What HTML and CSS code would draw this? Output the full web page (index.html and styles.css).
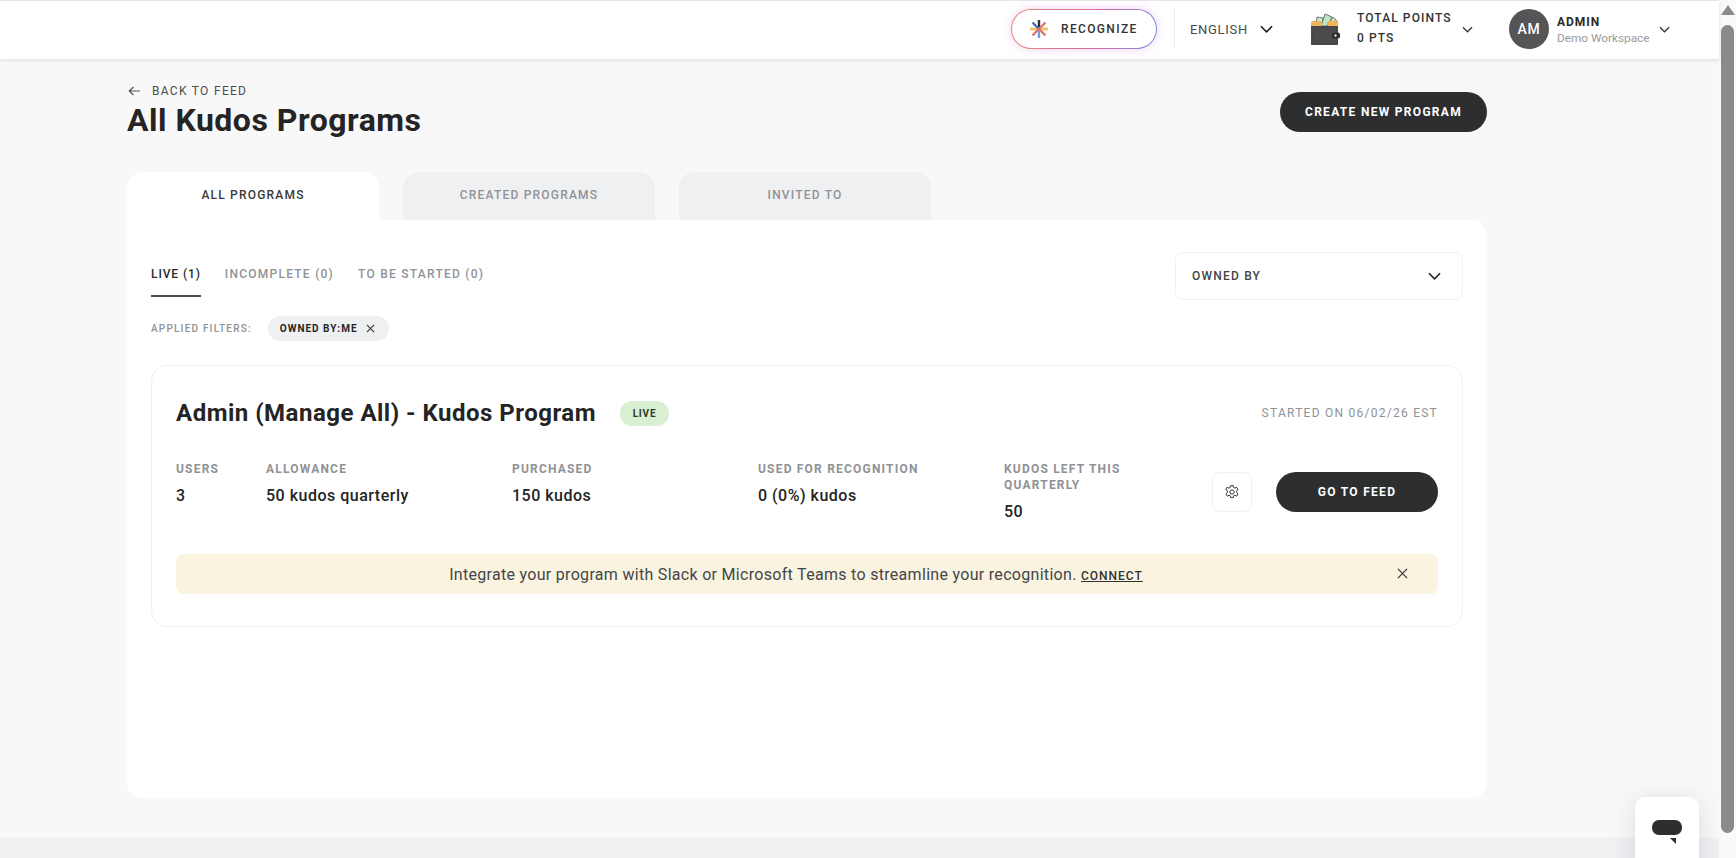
FILE: index.html
```html
<!DOCTYPE html>
<html lang="en">
<head>
<meta charset="utf-8">
<title>All Kudos Programs</title>
<link rel="stylesheet" href="styles.css">
</head>
<body>
<div class="page">
  <header class="topbar">
    <button class="recognize">
      <svg class="rec-icon" viewBox="0 0 20 20" width="20" height="20" aria-hidden="true">
        <path d="M1 10H19" stroke="#f2c27a" stroke-width="3"/>
        <path d="M10 1V10" stroke="#2e3033" stroke-width="2.4"/>
        <path d="M10 10V19" stroke="#6f9ee8" stroke-width="2.4"/>
        <path d="M3.5 3.5L10 10" stroke="#3f6fb5" stroke-width="2.4"/>
        <path d="M16.5 3.5L3.5 16.5" stroke="#d9776a" stroke-width="2.4"/>
        <path d="M10 10L16.5 16.5" stroke="#d9776a" stroke-width="2.4"/>
      </svg>
      <span>RECOGNIZE</span>
    </button>
    <div class="divider"></div>
    <div class="lang"><span>ENGLISH</span>
      <svg class="chev" viewBox="0 0 14 8" width="13" height="8"><path d="M1 1L7 7L13 1" fill="none" stroke="#2a1a1a" stroke-width="1.7"/></svg>
    </div>
    <div class="points">
      <svg class="wallet" viewBox="0 0 30 32" width="30" height="32" aria-hidden="true">
        <path d="M6 13L7 4L13 5L13 13Z" fill="#cfe8cf" stroke="#4a5a4a" stroke-width=".8"/>
        <path d="M11 13L15 1L22 4L18 13Z" fill="#bfe3c4" stroke="#4a5a4a" stroke-width=".8"/>
        <path d="M17 13L23 4L28 9L24 13Z" fill="#cfe8cf" stroke="#4a5a4a" stroke-width=".8"/>
        <circle cx="4" cy="11" r="3.2" fill="#f0b45a"/>
        <circle cx="9" cy="11" r="3" fill="#f0b45a"/>
        <circle cx="20" cy="10.5" r="3" fill="#f0b45a"/>
        <circle cx="25" cy="10.5" r="3.2" fill="#f0b45a"/>
        <rect x="1" y="13" width="27" height="19" fill="#4b4b4d"/>
        <rect x="2.5" y="14.5" width="24" height="16" fill="none" stroke="#3b3b3d" stroke-width=".6" stroke-dasharray="1 1"/>
        <rect x="22" y="19.5" width="8" height="6" rx="2" fill="#2d2d2f"/>
        <rect x="24.5" y="21.5" width="2" height="2" fill="#fff"/>
      </svg>
      <div class="points-text">
        <span>TOTAL POINTS</span>
        <span>0 PTS</span>
      </div>
      <svg class="chev chev-points" viewBox="0 0 12 7" width="11" height="7"><path d="M1 1L6 6L11 1" fill="none" stroke="#333" stroke-width="1.3"/></svg>
    </div>
    <div class="user">
      <div class="avatar">AM</div>
      <div class="user-text">
        <span class="user-name">ADMIN</span>
        <span class="user-org">Demo Workspace</span>
      </div>
      <svg class="chev chev-user" viewBox="0 0 12 7" width="11" height="7"><path d="M1 1L6 6L11 1" fill="none" stroke="#333" stroke-width="1.3"/></svg>
    </div>
  </header>

  <main class="content">
    <div class="head">
      <div>
        <a class="back">
          <svg viewBox="0 0 12 10" width="12" height="10" aria-hidden="true"><path d="M5.5 1L1.2 5L5.5 9M1.2 5H12" fill="none" stroke="#555" stroke-width="1.2"/></svg>
          <span>BACK TO FEED</span>
        </a>
        <h1>All Kudos Programs</h1>
      </div>
      <button class="btn btn-create">CREATE NEW PROGRAM</button>
    </div>

    <div class="tabs">
      <div class="tab active">ALL PROGRAMS</div>
      <div class="tab">CREATED PROGRAMS</div>
      <div class="tab">INVITED TO</div>
    </div>

    <section class="panel">
      <div class="panel-top">
        <nav class="subtabs">
          <span class="subtab on">LIVE (1)</span>
          <span class="subtab">INCOMPLETE (0)</span>
          <span class="subtab">TO BE STARTED (0)</span>
        </nav>
        <div class="select">
          <span>OWNED BY</span>
          <svg viewBox="0 0 14 8" width="13" height="8"><path d="M1 1L7 7L13 1" fill="none" stroke="#222" stroke-width="1.7"/></svg>
        </div>
      </div>
      <div class="filters">
        <span class="filters-label">APPLIED FILTERS:</span>
        <span class="chip">OWNED BY:ME
          <svg viewBox="0 0 10 10" width="9" height="9"><path d="M1 1L9 9M9 1L1 9" stroke="#333" stroke-width="1.2"/></svg>
        </span>
      </div>

      <article class="card">
        <div class="card-head">
          <h2>Admin (Manage All) - Kudos Program</h2>
          <span class="badge">LIVE</span>
          <span class="started">STARTED ON 06/02/26 EST</span>
        </div>
        <div class="card-body">
          <div class="stat stat-users"><div class="label">USERS</div><div class="value">3</div></div>
          <div class="stat"><div class="label">ALLOWANCE</div><div class="value">50 kudos quarterly</div></div>
          <div class="stat"><div class="label">PURCHASED</div><div class="value">150 kudos</div></div>
          <div class="stat"><div class="label">USED FOR RECOGNITION</div><div class="value">0 (0%) kudos</div></div>
          <div class="stat stat-left"><div class="label">KUDOS LEFT THIS QUARTERLY</div><div class="value">50</div></div>
          <div class="actions">
            <button class="gear" aria-label="Settings">
              <svg viewBox="0 0 24 24" width="16" height="16" fill="none" stroke="#333" stroke-width="1.5" stroke-linejoin="round">
                <path d="M10 2.5h4l.6 2.9 1.7.8 2.6-1.4 2.2 3.4-2.1 1.9v2.8l2.1 1.9-2.2 3.4-2.6-1.4-1.7.8-.6 2.9h-4l-.6-2.9-1.7-.8-2.6 1.4-2.2-3.4 2.1-1.9v-2.8L2.5 8.2l2.2-3.4 2.6 1.4 1.7-.8z"/>
                <circle cx="12" cy="12" r="3.2"/>
              </svg>
            </button>
            <button class="btn btn-feed">GO TO FEED</button>
          </div>
        </div>
        <div class="banner">
          <p>Integrate your program with Slack or Microsoft Teams to streamline your recognition. <a>CONNECT</a></p>
          <svg class="banner-x" viewBox="0 0 12 12" width="11" height="11"><path d="M1 1L11 11M11 1L1 11" stroke="#333" stroke-width="1.3"/></svg>
        </div>
      </article>
    </section>
  </main>
  <div class="footer-strip"></div>
</div>

<aside class="scrollbar">
  <div class="sb-arrow"></div>
  <div class="sb-thumb"></div>
</aside>

<div class="chat">
  <svg viewBox="0 0 30 24" width="30" height="24" aria-hidden="true">
    <rect x="0" y="0" width="30" height="15" rx="7" fill="#2d2e30"/>
    <path d="M18 18H24V24Z" fill="#2d2e30"/>
  </svg>
</div>
</body>
</html>
```
FILE: styles.css
```css
* { box-sizing: border-box; }
html, body { margin: 0; height: 100%; overflow: hidden; }
body {
  display: flex;
  font-family: "Roboto", "Liberation Sans", sans-serif;
  color: #2a2a2a;
  background: #f8f8f8;
}
button { font-family: inherit; cursor: pointer; }
.page {
  flex: 1;
  min-width: 0;
  height: 100%;
  display: flex;
  flex-direction: column;
}

/* top bar */
.topbar {
  flex: none;
  height: 59px;
  background: #fff;
  border-top: 1px solid #e6e7e9;
  box-shadow: 0 1px 4px rgba(0,0,0,.12);
  display: flex;
  align-items: flex-start;
  padding: 8px 0 0 1011px;
  position: relative;
  z-index: 2;
}
.topbar > * { height: 40px; }
.recognize {
  width: 146px;
  border-radius: 20px;
  border: 1px solid transparent;
  background:
    linear-gradient(#fff, #fff) padding-box,
    linear-gradient(100deg, #e58a78, #d86aa0 60%, #6f8fe8) border-box;
  box-shadow: 0 0 10px rgba(214,120,220,.35);
  display: flex;
  align-items: center;
  padding: 0 0 0 17px;
  gap: 12px;
  font-size: 12px;
  font-weight: 500;
  letter-spacing: 1.35px;
  color: #333;
}
.rec-icon { flex: none; }
.divider { width: 1px; background: #eceded; margin-left: 17px; }
.lang {
  display: flex;
  align-items: center;
  margin-left: 15px;
  font-size: 13px;
  letter-spacing: .7px;
  color: #4a4a4a;
  gap: 12px;
}
.points { display: flex; align-items: center; margin-left: 37px; }
.wallet { flex: none; }
.points-text {
  display: flex;
  flex-direction: column;
  gap: 7px;
  margin: 0 0 2px 17px;
  width: 105px;
  font-size: 12px;
  font-weight: 500;
  line-height: 13px;
  letter-spacing: 1.1px;
  color: #333;
}
.chev { flex: none; }
.user { display: flex; align-items: center; margin-left: 36px; }
.avatar {
  width: 40px;
  height: 40px;
  border-radius: 50%;
  background: #555456;
  color: #fff;
  font-size: 14px;
  font-weight: 500;
  letter-spacing: .6px;
  display: flex;
  align-items: center;
  justify-content: center;
}
.user-text { display: flex; flex-direction: column; margin: 1px 0 0 8px; width: 102px; gap: 2px; }
.user-name { font-size: 12px; font-weight: 700; letter-spacing: 1px; line-height: 14px; color: #2a2a2a; }
.user-org { font-size: 11.8px; line-height: 14px; color: #9a9a9a; }

/* content */
.content {
  flex: 1;
  width: 1360px;
  margin-left: 127px;
  display: flex;
  flex-direction: column;
  min-height: 0;
}
.head {
  display: flex;
  justify-content: space-between;
  align-items: flex-start;
  height: 113px;
  padding-top: 24px;
}
.back {
  display: flex;
  align-items: center;
  gap: 12px;
  padding-left: 1px;
  font-size: 12px;
  line-height: 16px;
  letter-spacing: 1.3px;
  color: #4c4c4c;
}
h1 {
  margin: 1px 0 0;
  font-size: 32px;
  line-height: 40px;
  font-weight: 700;
  color: #242424;
  letter-spacing: .5px;
}
.btn {
  border: 0;
  background: #2d2e30;
  color: #fff;
  height: 40px;
  border-radius: 20px;
  font-size: 12px;
  font-weight: 700;
  letter-spacing: 1.3px;
}
.btn-create { width: 207px; margin-top: 9px; }

.tabs { display: flex; gap: 24px; flex: none; }
.tab {
  width: 252px;
  height: 48px;
  background: #eff0f2;
  border-radius: 16px 16px 0 0;
  display: flex;
  justify-content: center;
  padding-top: 15px;
  font-size: 12px;
  line-height: 16px;
  font-weight: 500;
  letter-spacing: 1.2px;
  color: #8f9296;
}
.tab.active { background: #fff; color: #3a3a3a; }

.panel {
  height: 578px;
  flex: none;
  background: #fff;
  border-radius: 0 16px 16px 16px;
  padding: 32px 24px 0;
}
.panel-top { display: flex; justify-content: space-between; align-items: flex-start; }
.subtabs { display: flex; gap: 24px; }
.subtab {
  height: 45px;
  padding-top: 14px;
  font-size: 12px;
  line-height: 16px;
  font-weight: 500;
  letter-spacing: 1.25px;
  color: #8f9296;
}
.subtab.on { color: #2a2a2a; border-bottom: 2px solid #4d4d50; letter-spacing: .9px; }
.select {
  width: 288px;
  height: 48px;
  border: 1px solid #eff0f2;
  border-radius: 8px;
  display: flex;
  justify-content: space-between;
  align-items: center;
  padding: 0 21px 0 16px;
  font-size: 12px;
  font-weight: 500;
  letter-spacing: 1.2px;
  color: #444;
}
.filters { display: flex; align-items: center; margin-top: 16px; gap: 16px; }
.filters-label { font-size: 10px; font-weight: 500; letter-spacing: 1.2px; color: #8f9296; }
.chip {
  display: flex;
  align-items: center;
  justify-content: space-between;
  width: 121px;
  height: 25px;
  padding: 0 14px 0 12px;
  border-radius: 13px;
  background: #eff0f2;
  font-size: 10px;
  font-weight: 700;
  letter-spacing: 1px;
  color: #242424;
}

.card {
  margin-top: 24px;
  height: 262px;
  border: 1px solid #eff0f2;
  border-radius: 16px;
  padding: 35px 24px 0;
}
.card-head { display: flex; align-items: center; height: 25px; }
h2 { margin: 0; font-size: 24px; font-weight: 700; line-height: 25px; color: #242424; letter-spacing: .5px; }
.badge {
  margin-left: 24px;
  width: 49px;
  height: 25px;
  border-radius: 12px;
  background: #d9efd2;
  display: flex;
  align-items: center;
  justify-content: center;
  font-size: 10px;
  font-weight: 700;
  letter-spacing: .8px;
  color: #2a3a2a;
}
.started {
  margin: 0 0 2px auto;
  font-size: 12px;
  letter-spacing: 1.25px;
  color: #8f9296;
}
.card-body { display: flex; align-items: flex-start; margin-top: 35px; height: 93px; }
.stat { width: 246px; flex: none; }
.stat-users { width: 90px; }
.stat-left { width: 186px; }
.label {
  font-size: 12px;
  line-height: 16px;
  font-weight: 700;
  letter-spacing: 1.2px;
  color: #8f9296;
}
.value {
  margin-top: 9px;
  font-size: 16px;
  line-height: 20px;
  font-weight: 500;
  letter-spacing: .5px;
  color: #242424;
}
.actions { display: flex; align-items: center; gap: 24px; margin-left: 22px; margin-top: 11px; }
.gear {
  width: 40px;
  height: 40px;
  border: 1px solid #eff0f2;
  border-radius: 8px;
  background: #fff;
  display: flex;
  align-items: center;
  justify-content: center;
  padding: 0;
}
.btn-feed { width: 162px; }
.banner {
  height: 40px;
  background: #faf3e0;
  border-radius: 8px;
  display: flex;
  align-items: center;
  justify-content: center;
  padding-right: 22px;
  position: relative;
}
.banner p { margin: 0; font-size: 16px; letter-spacing: .3px; color: #44464a; }
.banner a {
  font-size: 12px;
  font-weight: 500;
  letter-spacing: 1px;
  text-decoration: underline;
  color: #333;
}
.banner-x { position: absolute; right: 30px; top: 14px; }

.footer-strip { flex: none; height: 20px; margin-top: 40px; background: #eff0f2; }

/* fake scrollbar */
.scrollbar {
  flex: none;
  width: 17px;
  height: 100%;
  background: #fafafa;
  display: flex;
  flex-direction: column;
  align-items: center;
}
.sb-arrow {
  width: 0;
  height: 0;
  margin-top: 5px;
  border-left: 7px solid transparent;
  border-right: 7px solid transparent;
  border-bottom: 10px solid #8b8b8b;
}
.sb-thumb {
  width: 13px;
  height: 808px;
  margin-top: 10px;
  border-radius: 7px;
  background: #8b8b8b;
}

.chat {
  position: absolute;
  left: 1635px;
  top: 797px;
  width: 64px;
  height: 72px;
  background: #fff;
  border-radius: 10px;
  box-shadow: 0 4px 24px rgba(40,50,80,.14);
  padding: 23px 0 0 17px;
}
```
